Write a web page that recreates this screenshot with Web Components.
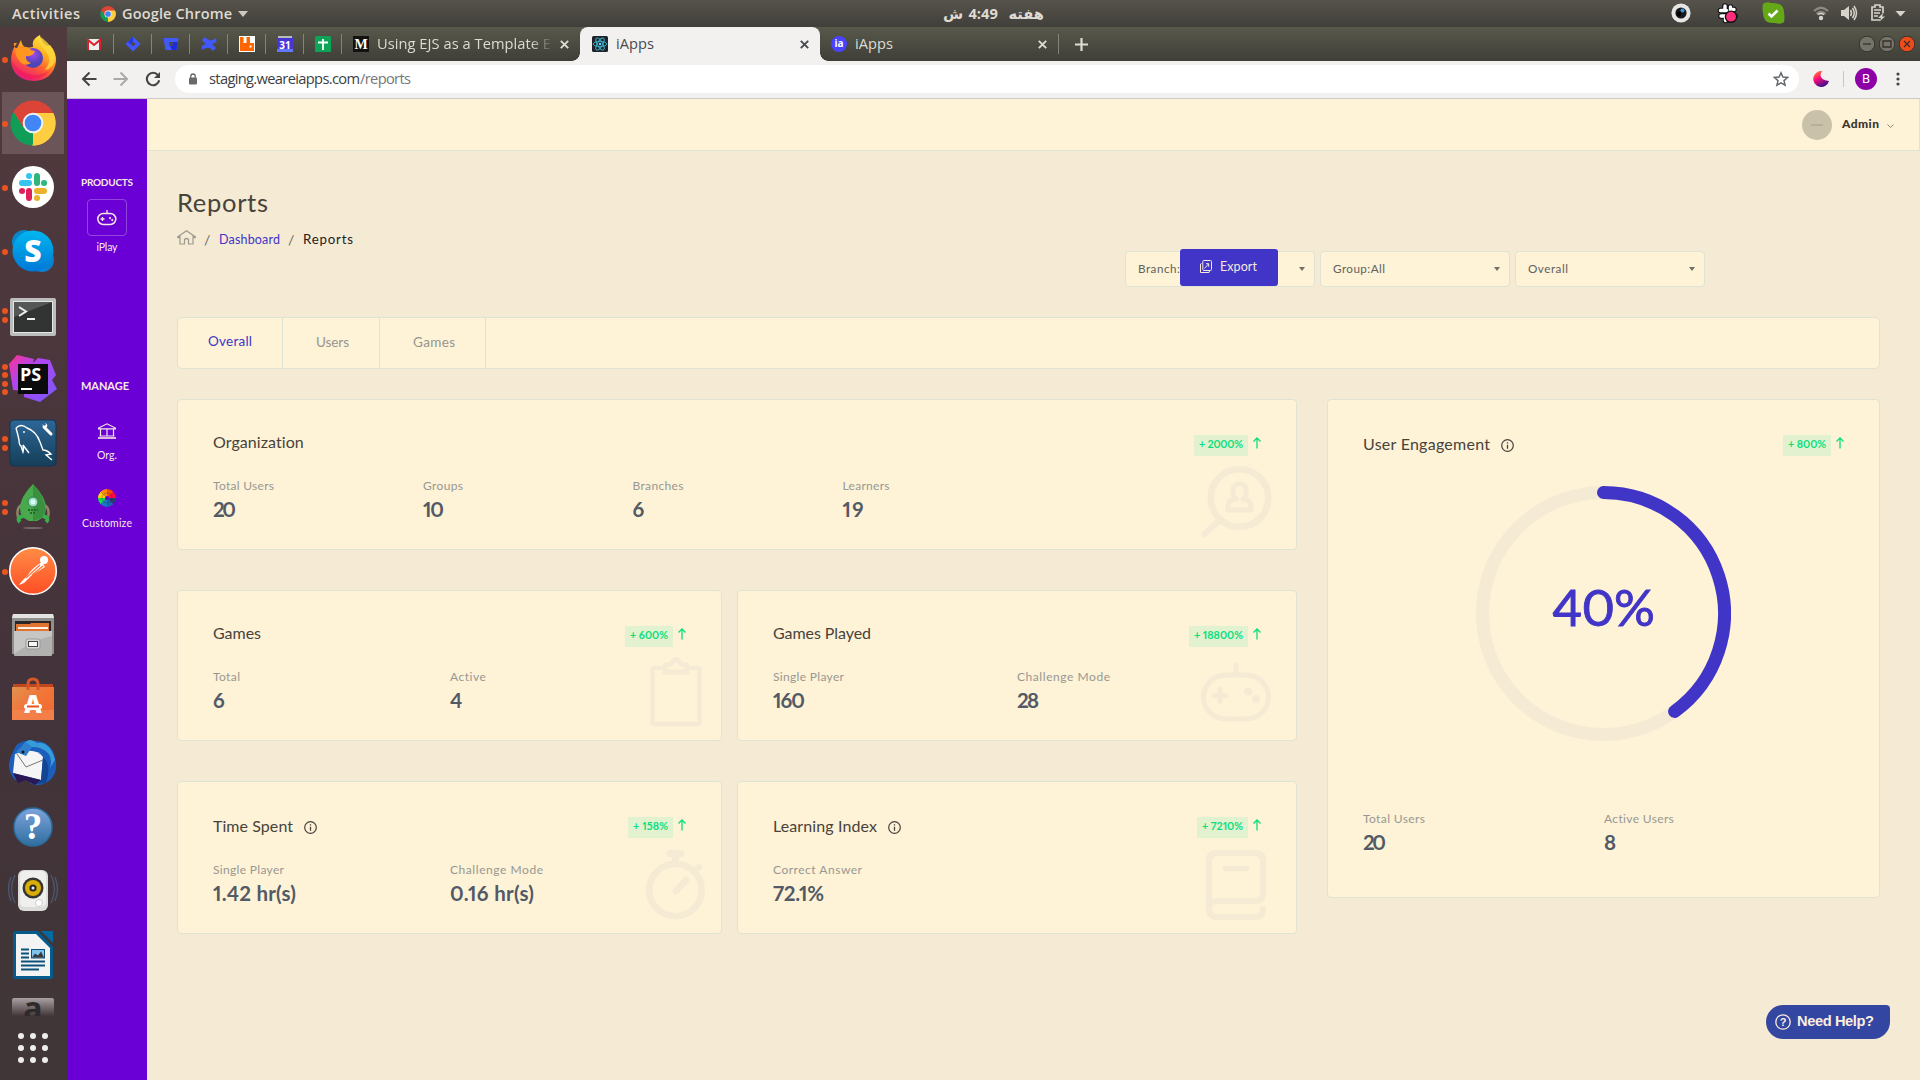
<!DOCTYPE html>
<html lang="en">
<head>
<meta charset="utf-8">
<title>iApps</title>
<style>
html,body{margin:0;padding:0;width:1920px;height:1080px;overflow:hidden;background:#f5ead4}
body{font-family:Lato,"Open Sans",sans-serif;color:#47433c}
</style>
</head>
<body>
<desktop-shell></desktop-shell>
<script>
const define=(name,css,html,after)=>{
  const tpl=document.createElement('template');
  customElements.define(name,class extends HTMLElement{
    connectedCallback(){
      if(this.shadowRoot)return;
      tpl.innerHTML='<style>'+css+'</style>'+(typeof html==='function'?html(this):html);
      this.attachShadow({mode:'open'}).appendChild(tpl.content.cloneNode(true));
      if(after)after(this,this.shadowRoot);
    }
  });
};
const at=(el,n,d='')=>el.getAttribute(n)??d;

/* Text whose tracking is tuned so the run fills the width in "w". */
define('fit-text',':host{display:block;white-space:pre;flex:none;font-feature-settings:"pnum"}','<span><slot></slot></span>',(el,root)=>{
  const w=+el.getAttribute('w');if(!w)return;
  const span=root.querySelector('span'),n=el.textContent.length;
  const nat=span.getBoundingClientRect().width;
  el.style.width=w+'px';
  if(nat&&n>1)span.style.letterSpacing=((w-nat)/(n-1)).toFixed(3)+'px';
});

/* ---------- GNOME top bar ---------- */
const CHROME=(r)=>`<path d="M0 0L${-r*.866} ${-r*.5}A${r} ${r} 0 0 1 ${r*.866} ${-r*.5}Z" fill="#db4437"/>
<path d="M0 0L${r*.9} ${-r*.45}A${r} ${r} 0 0 1 0 ${r}Z" fill="#ffcd40"/>
<path d="M0 0L0 ${r}A${r} ${r} 0 0 1 ${-r*.866} ${-r*.5}Z" fill="#0f9d58"/>
<path d="M${-r*.866} ${-r*.5}A${r} ${r} 0 0 1 ${r*.89} ${-r*.44}H0L${-r*.4} ${r*.24}Z" fill="#db4437"/>
<path d="M${r*.89} ${-r*.44}A${r} ${r} 0 0 1 ${-r*.04} ${r}L${r*.4} ${r*.2}L0 ${-r*.44}Z" fill="#ffcd40"/>
<circle r="${r*.46}" fill="#f1f1f1"/><circle r="${r*.37}" fill="#4285f4"/>`;

define('system-bar',`
:host{display:grid;grid-template-columns:1fr auto 1fr;align-items:center;height:27px;background:linear-gradient(#57534c,#403f3a);color:#dfdbd2;font:600 14.5px/27px "Open Sans","DejaVu Sans",sans-serif}
.l,.r{display:flex;align-items:center}.l{padding-left:12px}
.r{justify-content:flex-end;height:27px}
svg{display:block;flex:none}
.clock{font:bold 14.670px/25px "Open Sans","DejaVu Sans",sans-serif;word-spacing:1.500px;margin-left:64px;width:104px;white-space:nowrap}`,
`<div class="l"><fit-text w="68">Activities</fit-text>
<svg style="margin:0 6px 0 20px" width="16" height="16" viewBox="-8 -8 16 16">${CHROME(7.7)}</svg>
<fit-text w="110">Google Chrome</fit-text>
<svg style="margin-left:6px" width="10" height="6"><path d="M0 0H10L5 6Z" fill="#ccc9c0"/></svg></div>
<div class="clock" dir="rtl">هفته&nbsp; 4:49 ش</div>
<svg class="r" width="250" height="27" viewBox="1670 0 250 27" style="justify-self:end">
<circle cx="1681" cy="13" r="9.6" fill="#e6e6e4"/><circle cx="1681" cy="13" r="5.6" fill="#17191c"/><circle cx="1682.5" cy="10.5" r="2" fill="#3d94d6"/><circle cx="1679" cy="14" r="2.4" fill="#000"/>
<g stroke="#111" stroke-width="5.6" stroke-linecap="round"><path d="M1725 6v4M1730.500 7v5M1720.500 10.500h6M1733 9.500h1M1721 16h5M1725.500 16.500v4M1731 16h4"/></g>
<g stroke="#fff" stroke-width="3.400" stroke-linecap="round"><path d="M1725 6v4M1730.500 7v5M1720.500 10.500h6M1733 9.500h1M1721 16h5M1725.500 16.500v4M1731 16h4"/></g>
<circle cx="1731" cy="16.700" r="5.600" fill="#ff2e7d" stroke="#111" stroke-width="1.400"/>
<path d="M1763 4q3-3 8-1 13-1 13 10 1 4 0 9-3 3-9 1-12 1-12-10-1-5 0-9Z" fill="#64a818"/><path d="M1768.500 13.500l3 3 6-6" fill="none" stroke="#fff" stroke-width="2.600"/>
<g fill="none" stroke="#8b8982" stroke-width="2.200"><path d="M1814 11q7-6.500 14 0M1816.500 14q4.500-4 9 0" /></g><path d="M1818 14.600q3-2 6 0" fill="none" stroke="#d6d3ca" stroke-width="1.500"/><circle cx="1821" cy="18" r="2.200" fill="#d6d3ca"/>
<path d="M1841 10h3l5-4v14l-5-4h-3Z" fill="#d6d3ca"/><g fill="none" stroke="#d6d3ca" stroke-width="1.500"><path d="M1850.500 10q2 3 0 6M1852.500 8q3.500 5 0 10M1854 6q5 7 0 14"/></g>
<path d="M1880 20h-8V7h3V5h5v2h3v6" fill="none" stroke="#d6d3ca" stroke-width="1.700"/><path d="M1874 10h7M1874 13h6M1874 16h4" stroke="#d6d3ca" stroke-width="1.500"/><path d="M1883 13l-5 5h3l-1.500 3.500 5.500-5h-3l1.500-3.500Z" fill="#d6d3ca"/>
<path d="M1895.500 11h10l-5 5.500Z" fill="#d6d3ca"/></svg>`);

/* ---------- Dock ---------- */
define('dock-item',`
:host{display:flex;width:67px;height:64px;position:relative;flex:none}
.dots{width:10px;display:flex;flex-direction:column;justify-content:center;align-items:center;gap:2.500px;z-index:1;padding-top:1px}
.dots i{width:6px;height:6px;border-radius:3px;background:#e95420}
.art{margin-left:-10px;width:67px;height:100%}
:host([active]) .art{background:linear-gradient(#6c5558,#6c5558) 2px 1px/62px 62px no-repeat}
svg{display:block;width:67px;height:100%;overflow:visible}
text{font-family:"Open Sans",sans-serif}`,
el=>`<div class="dots">${'<i></i>'.repeat(+at(el,'dots',0))}</div><div class="art"><svg viewBox="-33 -32 67 64">${ICONS[at(el,'icon')]}</svg></div>`);

const ICONS={
firefox:`<defs><linearGradient id="a" x1=".8" y1="0" x2=".3" y2="1"><stop offset="0" stop-color="#fff44f"/><stop offset=".35" stop-color="#ffb31f"/><stop offset=".65" stop-color="#ff5a34"/><stop offset="1" stop-color="#e31587"/></linearGradient><radialGradient id="b" cx=".5" cy=".3"><stop offset="0" stop-color="#a848f0"/><stop offset="1" stop-color="#4b45b8"/></radialGradient></defs>
<path d="M-19-16q-1 5 3 5l4-8q1 6 5 8l7-1q-2-8 7-12 1 7 7 11l3-1q7 8 6 17-3 18-22 19-21-1-23-20 0-11 6-18Z" fill="url(#a)"/><circle cx="0" cy="-1" r="10" fill="url(#b)"/><path d="M-18-10q9-4 14-1 2 3 6 3-2 6-9 5-1 5 5 7-6 4-11-1Q-18-3-18-10Z" fill="#ff9620"/><path d="M-22-2q2 16 16 21 13 4 22-7-10 6-20 3-15-4-18-17Z" fill="#f5164e" opacity=".55"/><path d="M8-22q-3 8 5 14 7 10-1 19 9-2 10-11 0-11-14-22Z" fill="#ffd83c" opacity=".8"/>`,
chrome:CHROME(22.5),
slack:`<circle r="21" fill="#fff"/><g stroke-width="6" stroke-linecap="round" fill="none"><path d="M-11-4h7" stroke="#36c5f0"/><path d="M-4-11h.1" stroke="#36c5f0"/><path d="M4-11v7" stroke="#2eb67d"/><path d="M11-4h.1" stroke="#2eb67d"/><path d="M4 4h7" stroke="#ecb22e"/><path d="M4 11h.1" stroke="#ecb22e"/><path d="M-4 4v7" stroke="#e01e5a"/><path d="M-11 4h.1" stroke="#e01e5a"/></g>`,
skype:`<defs><linearGradient id="a" x2="0" y2="1"><stop stop-color="#00b7f0"/><stop offset="1" stop-color="#0078d7"/></linearGradient></defs><circle cx="-9" cy="-9" r="12" fill="#0a87ca"/><circle cx="9" cy="9" r="12" fill="#0d7fd0"/><circle r="20.500" fill="url(#a)"/><text y="11" text-anchor="middle" font-size="30" font-weight="800" fill="#fff">S</text>`,
terminal:`<rect x="-23" y="-17" width="46" height="38" rx="2" fill="#bcbcbc"/><rect x="-20" y="-14" width="40" height="32" fill="#e6e6e6"/><rect x="-19" y="-13" width="38" height="30" fill="#323433"/><path d="M-19-13h38L-19 2Z" fill="#555756"/><path d="M-14-8l7 4.500-7 4.500M-6 4h8" stroke="#eee" stroke-width="2" fill="none"/>`,
storm:`<defs><linearGradient id="a" x2="1" y2="1"><stop stop-color="#ff318c"/><stop offset=".35" stop-color="#b345f1"/><stop offset="1" stop-color="#765af8"/></linearGradient></defs><path d="M-24-15l8-9 17 4-1 4 5-5 12 2 6 15-4 5 5 9-17 13-16-5v-6l-11-1Z" fill="url(#a)"/><rect x="-15" y="-15" width="30" height="30" fill="#0b0b0d"/><text x="-13" y="2" font-size="18" font-weight="700" fill="#fff">PS</text><rect x="-12" y="9" width="11" height="2" fill="#fff"/>`,
mysql:`<defs><linearGradient id="a" x2="0" y2="1"><stop stop-color="#2d6797"/><stop offset="1" stop-color="#163e59"/></linearGradient></defs><rect x="-23" y="-23" width="46" height="46" rx="4" fill="url(#a)" stroke="#123650"/><path d="M-17-15q5-5 11 0 9 3 13 14l3 8q4 0 8 4l-5 1 6 5M-17-15q2 7 3 12 0 5 2 6l2 6q1-3 0-7l6 8" fill="none" stroke="#fff" stroke-width="1.400"/><path d="M11-16l7 7" stroke="#fff" stroke-width="3" stroke-linecap="round"/><path d="M9-19l2 2 2-1-1-2q3 1 2 4-3 2-5-3Z" fill="#fff"/><circle cx="-9" cy="-11" r=".9" fill="#fff"/>`,
robot:`<ellipse cy="21" rx="10" ry="1" fill="#77696b"/><path d="M-12-2q-5 4-3 12M12-2q5 4 3 12" fill="none" stroke="#918468" stroke-width="2.500"/><path d="M0-23Q18-5 11 10L4 14H-4L-11 10Q-18-5 0-23Z" fill="#49a94c"/><path d="M0-23Q16-5 11 10L0 14Z" fill="#39913f"/><circle cy="-5" r="5" fill="#9edac3" stroke="#2b8541"/><circle cy="-5" r="2.500" fill="#d7fff5"/><path d="M-5 3H5M-3 6H3" stroke="#226b2d" stroke-width="2" stroke-dasharray="2 1"/><path d="M-10 9q-7 2-3 6M10 9q7 2 3 6" fill="none" stroke="#37b04b" stroke-width="4"/>`,
postman:`<defs><linearGradient id="a" x2="0" y2="1"><stop stop-color="#ff8c45"/><stop offset="1" stop-color="#ff4e25"/></linearGradient></defs><circle cy="0" r="23.300" fill="url(#a)" stroke="#fff" stroke-width="1.600"/><circle cx="11" cy="-11" r="4" fill="#fff"/><path d="M9-9Q-1-3-5 4L-11 10-14 14-9 12-1 4 12-4Z" fill="#fff"/><path d="M7-6L-7 7M10-5L-1 4" stroke="#ff7137" stroke-width="1.200"/>`,
files:`<path d="M-20-21h40l1 6v22H-21v-22Z" fill="#c9c9c9"/><path d="M-20-21h40l1 4H-21Z" fill="#e2e2e2"/><path d="M-21-17h42v36H-21Z" fill="#8f8f8e"/><rect x="-18" y="-14" width="36" height="12" fill="#292727"/><path d="M-17-11h14l1-1h18v8H-17Z" fill="#e0732f"/><path d="M-15-8h30v2h-30Z" fill="#fff1e4"/><rect x="-19" y="-4" width="38" height="25" rx="1" fill="#b1b1b0"/><path d="M-19-4H19V1Q0 5-19 19Z" fill="#c6c6c5"/><rect x="-7" y="4" width="14" height="10" rx="2" fill="#d7d7d7" stroke="#999"/><rect x="-4.500" y="6.500" width="9" height="5" fill="#f6f6f6" stroke="#444"/>`,
software:`<defs><linearGradient id="a" x2="1" y2="1"><stop stop-color="#e09250"/><stop offset=".5" stop-color="#f37337"/><stop offset="1" stop-color="#ee6a30"/></linearGradient></defs><path d="M-20-15H20v6H-20Z" fill="#bd471f"/><path d="M-21-12H21V21H-21Z" fill="url(#a)"/><path d="M-5-9v-6q0-5 5-5t5 5v6" fill="none" stroke="#d65a29" stroke-width="3"/><path d="M-21 11H21V21H-21Z" fill="#f58a56" opacity=".6"/><text y="14" font-size="24" font-weight="800" fill="#fff" text-anchor="middle">A</text><rect x="-9" y="5" width="18" height="5" rx="2.500" fill="#fff"/><rect x="-6" y="6.500" width="12" height="2" fill="#e95420"/>`,
thunder:`<path d="M-20-11Q-16-24-1-22 12-24 20-12 28 8 16 18 7 24-1 21L-10 14-18 17Q-29 4-20-11Z" fill="#1c5ebc"/><path d="M-12-14Q-6-28 4-20 17-22 22-3L17 5q4-14-8-19-7-4-21 0Z" fill="#359bd9"/><path d="M-18-9Q2-17 10-6L8 17-20 10Z" fill="#f5f5f5"/><path d="M-16-9L-7 4 10-3" fill="none" stroke="#777" stroke-width="1"/><path d="M-17-11l10 4 6-9-6-5Z" fill="#2f7fcb"/><circle cx="-10" cy="-11" r="1.500" fill="#111"/><path d="M-20 10L8 17l-6 5-9-5-8 3Z" fill="#2a1756"/><path d="M10-6q9 8 3 26L4 21 8 17Z" fill="#144494"/>`,
help:`<defs><linearGradient id="a" x2="0" y2="1"><stop stop-color="#7ea4dc"/><stop offset="1" stop-color="#2f6e9f"/></linearGradient></defs><circle r="19" fill="url(#a)" stroke="#2a6c9c" stroke-width="1.500"/><text y="12" text-anchor="middle" font-size="37" fill="#fff" style="font-family:'Liberation Serif',serif;font-weight:bold">?</text>`,
rhythm:`<g fill="none" stroke="#4f627e" stroke-width="1.300" opacity=".8"><path d="M-18-16q-7 14 0 28M18-16q7 14 0 28M-22-14q-5 12 0 24M22-14q5 12 0 24"/></g><rect x="-15" y="-21" width="30" height="41" rx="6" fill="#dcdcda"/><rect x="-13" y="-20" width="26" height="36" rx="5" fill="#efefed"/><circle cy="-3" r="10.500" fill="#38372f"/><circle cy="-3" r="8" fill="#d9ad08"/><circle cy="-3" r="3.600" fill="#292929"/><circle cy="-3" r="1.500" fill="#eee"/><circle cx="6" cy="12" r="3.500" fill="#fff" stroke="#ccc"/>`,
writer:`<path d="M-17-24H5L20-8V22q0 2-3 2H-17q-3 0-3-2V-21q0-3 3-3Z" fill="#045b8c"/><path d="M-17-21H3L17-7V21H-17Z" fill="#f3f3f3"/><path d="M8-24h12v12Z" fill="#0369a3"/><g stroke="#0b527b" stroke-width="2"><path d="M-12-5.500h8M-12-1.500h8M-12 2.500h8M-12 6.500h24M-12 10.500h24M-12 14.500H6"/></g><rect x="-1.500" y="-5.500" width="13" height="8.500" fill="#7fc2ed" stroke="#0b527b"/><path d="M-1 2.500l3-4 3 2 3-4 3 6Z" fill="#3a3a3a"/>`,
};

define('app-dock',`
:host{display:flex;flex-direction:column;width:67px;height:1053px;background:linear-gradient(#513a3e,#43333a 65%,#403637)}
.peek{width:42px;height:18px;margin:11px 0 0 12px;overflow:hidden;background:linear-gradient(#a8a0a2,#43363a);border-radius:2px 2px 0 0;text-align:center;font:bold 32px/20px "Open Sans",sans-serif;color:#2e2a2b}
.grid{display:grid;grid-template-columns:repeat(3,6px);gap:6px;margin:17px 0 0 18px}
.grid i{width:6px;height:6px;border-radius:3px;background:#eee}`,
`<dock-item icon="firefox" dots="1"></dock-item><dock-item icon="chrome" dots="1" active></dock-item><dock-item icon="slack" dots="1"></dock-item><dock-item icon="skype" dots="1"></dock-item><dock-item icon="terminal" dots="2"></dock-item><dock-item icon="storm" dots="4"></dock-item><dock-item icon="mysql" dots="2"></dock-item><dock-item icon="robot" dots="2"></dock-item><dock-item icon="postman" dots="1"></dock-item>
<dock-item icon="files"></dock-item><dock-item icon="software"></dock-item><dock-item icon="thunder"></dock-item><dock-item icon="help"></dock-item><dock-item icon="rhythm"></dock-item><dock-item icon="writer"></dock-item>
<div class="peek">a</div><div class="grid">${'<i></i>'.repeat(9)}</div>`);

/* ---------- Browser chrome ---------- */
const FAV={
gmail:`<rect x="1" y="3" width="14" height="11" fill="#eee"/><path d="M2 14V4l6 5 6-5v10" fill="none" stroke="#d9202c" stroke-width="2"/>`,
jira:`<path d="M8 .5l7.500 7.500L8 15.500.5 8Z" fill="#4257fb"/><path d="M8 5.500l2.500 2.500L8 10.500 5.500 8Z" fill="#4c4b41"/><path d="M8 .5v5L5.500 8 3 6Z" fill="#2536d9"/>`,
bit:`<path d="M.5 2h15l-2 12h-11Z" fill="#4059fb"/><path d="M6 6h4l-.6 4H6.500Z" fill="#4c4b41"/><path d="M10 6h4.800l-1.300 8H9l-2-4h2.400Z" fill="#1d2bd8"/>`,
conf:`<path d="M1 4l3-3q4 6 11 1l.500 4Q6 12 1 4ZM15 12l-3 3Q8 9 1 14l-.500-4Q9 4 15 12Z" fill="#4158fb"/>`,
rabbit:`<rect width="16" height="16" fill="#fff"/><path d="M1 1h3.500v6h3V1H11v6h4v8H1Z" fill="#f60"/><rect x="10.500" y="9.500" width="2" height="2" fill="#fff"/>`,
cal:`<rect y="1" width="16" height="15" rx="1" fill="#4836d4"/><path d="M1 0h14v2H1Z" fill="#bbb"/><rect y="13" width="16" height="3" fill="#6278ff"/><text x="8" y="12.500" font-size="10" font-weight="700" text-anchor="middle" fill="#fff">31</text>`,
sheet:`<rect width="16" height="16" rx="1.500" fill="#0ca558"/><path d="M8 3v11M3 6.500h10" stroke="#fff" stroke-width="1.800"/>`,
medium:`<rect width="16" height="16" fill="#121212"/><text x="8" y="13" font-size="14" text-anchor="middle" fill="#fff" style="font-family:'Liberation Serif',serif;font-weight:bold">M</text>`,
react:`<rect width="16" height="16" rx="1.500" fill="#20232a"/><g fill="none" stroke="#3fb3cf" stroke-width=".9"><ellipse cx="8" cy="8" rx="6.800" ry="2.600"/><ellipse cx="8" cy="8" rx="6.800" ry="2.600" transform="rotate(60 8 8)"/><ellipse cx="8" cy="8" rx="6.800" ry="2.600" transform="rotate(120 8 8)"/></g><circle cx="8" cy="8" r="1.200" fill="#61dafb"/>`,
ia:`<circle cx="8" cy="8" r="8" fill="#4743ff"/><text x="8" y="11.300" font-size="10" font-weight="700" text-anchor="middle" fill="#fff">ia</text>`
};
define('fav-icon',`:host{display:block;width:16px;height:16px;flex:none}svg{display:block}text{font-family:"Open Sans",sans-serif}`,el=>`<svg width="16" height="16">${FAV[at(el,'n')]}</svg>`);
define('close-x',`:host{display:block;width:9px;height:9px;flex:none}svg{display:block}`,`<svg width="9" height="9"><path d="M.8.8l7.400 7.400M8.200.8L.8 8.200" stroke="currentColor" stroke-width="1.900"/></svg>`);
define('browser-tabs',`
:host{display:flex;align-items:center;height:34px;background:linear-gradient(#58594b,#3f3e38);color:#dedbd2;font:14.670px/34px "Open Sans",sans-serif}
.pin{display:flex;align-items:center;width:37px;justify-content:center;height:20px;border-right:1px solid #85847b}
.pin:first-of-type{width:38px;padding-left:8px}
.tab{display:flex;align-items:center;height:34px;width:240px;box-sizing:border-box;padding:0 11px 0 12px}
.tab fit-text{margin:-2px 0 0 8px}.tab close-x{margin-left:auto}
.first{width:246px;padding-left:19px;margin-left:-8px}
.fade{-webkit-mask:linear-gradient(90deg,#000 88%,rgba(0,0,0,.1))}
.on{background:#f2f1f0;color:#474b50;border-radius:8px 8px 0 0;position:relative}
.on:before,.on:after{content:"";position:absolute;bottom:0;width:8px;height:8px;background:radial-gradient(circle at 0 0,transparent 7.500px,#f2f1f0 8px)}
.on:before{left:-8px}.on:after{right:-8px;transform:scaleX(-1)}
.last{width:238px;padding-left:11px}
.sep{width:1px;height:20px;background:#85847b}
.win{display:flex;gap:4px;margin-left:auto;padding-right:5px}`,
`${['gmail','jira','bit','conf','rabbit','cal','sheet'].map(n=>`<div class="pin"><fav-icon n="${n}"></fav-icon></div>`).join('')}
<div class="tab first"><fav-icon n="medium"></fav-icon><fit-text class="fade" w="174">Using EJS as a Template E</fit-text><close-x></close-x></div>
<div class="tab on"><fav-icon n="react"></fav-icon><fit-text w="38">iApps</fit-text><close-x></close-x></div>
<div class="tab last"><fav-icon n="ia"></fav-icon><fit-text w="38">iApps</fit-text><close-x></close-x></div>
<div class="sep"></div>
<svg style="margin-left:16px" width="13" height="13"><path d="M6.500 0v13M0 6.500h13" stroke="#dedbd2" stroke-width="2.200"/></svg>
<div class="win">${['M4 8h8','M4 5h8v6H4Z','M5 5l6 6M11 5l-6 6'].map((d,i)=>`<svg width="16" height="16"><circle cx="8" cy="8" r="7.800" fill="${i==2?'#ef4b1a':'#74746a'}" stroke="#34332e"/><path d="${d}" fill="none" stroke="#3a2f28" stroke-width="1.300"/></svg>`).join('')}</div>`);

define('browser-toolbar',`
:host{display:flex;align-items:center;box-sizing:border-box;height:38px;padding:0 20px 2px 14px;border-bottom:1px solid #cbcac9;background:#f2f1f0;font:14.670px/28px "Open Sans",sans-serif;color:#3c3f43}
svg{display:block;flex:none}
.omni{display:flex;align-items:center;flex:1;height:28px;border-radius:14px;background:#fff;margin:0 14px 0 14px;padding:0 10px 0 14px}
.omni fit-text{margin-top:-2px}
.omni fit-text:first-of-type{margin-left:12px}.g{color:#74777b}
.b{width:22px;height:22px;border-radius:11px;background:#8c00a6;color:#fff;text-align:center;font:13px/22px Roboto,sans-serif;margin:0 19px 0 11px}
.v{width:1px;height:16px;background:#c8c7c6;margin-left:14px}`,
`<svg width="16" height="16"><path d="M8.500 1.500L2 8l6.500 6.500M2 8h13.500" fill="none" stroke="#454545" stroke-width="2"/></svg>
<svg style="margin-left:16px" width="16" height="16"><path d="M7.500 1.500L14 8l-6.500 6.500M14 8H.5" fill="none" stroke="#aaa9a8" stroke-width="2"/></svg>
<svg style="margin-left:16px" width="16" height="16"><path d="M13 4.200A6.200 6.200 0 1 0 14.200 9.200" fill="none" stroke="#454545" stroke-width="2.100"/><path d="M15 1v6H9Z" fill="#454545"/></svg>
<div class="omni"><svg width="8" height="12"><rect y="4.500" width="8" height="7" rx="1" fill="#666a6d"/><path d="M1.800 5V3.200a2.200 2.200 0 0 1 4.400 0V5" fill="none" stroke="#666a6d" stroke-width="1.300"/></svg>
<fit-text w="151">staging.weareiapps.com</fit-text><fit-text class="g" w="51">/reports</fit-text>
<svg style="margin-left:auto" width="16" height="16"><path d="M8 1.800l1.900 4.300 4.700.4-3.600 3.100 1.100 4.600L8 11.800l-4.100 2.400L5 9.600 1.400 6.500l4.700-.4Z" fill="none" stroke="#65696c" stroke-width="1.500"/></svg></div>
<svg width="16" height="16"><defs><linearGradient id="m" x1="0" y1="0" x2=".5" y2="1"><stop stop-color="#ff9a1f"/><stop offset=".5" stop-color="#ff0a78"/><stop offset="1" stop-color="#43108f"/></linearGradient></defs><path d="M9 0Q4 8 16 10A8 8 0 1 1 9 0Z" fill="url(#m)"/></svg>
<div class="v"></div><div class="b">B</div>
<svg width="4" height="14"><g fill="#454545"><circle cx="2" cy="2" r="1.600"/><circle cx="2" cy="7" r="1.600"/><circle cx="2" cy="12" r="1.600"/></g></svg>`);

/* ---------- Application ---------- */
define('side-nav',`
:host{display:flex;flex-direction:column;align-items:center;width:80px;height:981px;background:#6a00d5;color:#f8e8e4;font:400 10.500px/14px Lato,sans-serif}
.h{font-weight:700;line-height:16px;align-self:flex-start;margin-left:14px}
.box{display:flex;align-items:center;justify-content:center;width:38px;height:35px;border:1px solid #9145de;border-radius:4px;margin:9px 0 4px}
svg{display:block}`,
`<fit-text class="h" w="52" style="margin-top:75px;font-size:10px">PRODUCTS</fit-text>
<div class="box"><svg width="20" height="18" viewBox="0 0 20 18" fill="none" stroke="#f8e8e4"><rect x=".8" y="4.500" width="18" height="11" rx="5.500" stroke-width="1.500"/><path d="M10 4.500V1M5.500 8v4M3.500 10h4" stroke-width="1.300"/><circle cx="13" cy="9" r=".7" fill="#f8e8e4"/><circle cx="15.300" cy="11" r=".7" fill="#f8e8e4"/></svg></div>
<fit-text w="21">iPlay</fit-text>
<fit-text class="h" w="48" style="margin-top:124px;font-size:11px">MANAGE</fit-text>
<svg style="margin:29px 0 9px" width="18" height="16" viewBox="0 0 18 16" fill="none" stroke="#f8e8e4" stroke-width="1.200"><path d="M.6 5L9 .8 17.400 5v.8H.6ZM2.500 6v7M9 6v7M15.500 6v7M1.500 13h15"/><path d="M0 15h18" stroke-width="2" opacity=".8"/></svg>
<fit-text w="20">Org.</fit-text>
<svg style="margin:27px 0 9px" width="18" height="18" viewBox="-9 -9 18 18">${['#ffd000','#ff9000','#ff4a00','#ff0a3c','#20406f','#1b65b0','#1878c8','#12dc48'].map((col,i)=>{const a=(i-4)*Math.PI/4,b=a+Math.PI/4,s=t=>`${(9*Math.cos(t)).toFixed(2)} ${(9*Math.sin(t)).toFixed(2)}`;return `<path d="M0 0L${s(a)}A9 9 0 0 1 ${s(b)}Z" fill="${col}"/>`}).join('')}<circle r="5" fill="none" stroke="#2b2350" stroke-width="1" opacity=".35"/><circle r="2" fill="#6a00d5"/></svg>
<fit-text w="50">Customize</fit-text>`);

define('app-header',`
:host{display:flex;align-items:center;justify-content:flex-end;box-sizing:border-box;height:52px;background:#fef2d7;border:1px solid #dfe3d2;border-width:0 1px 1px 0;padding-right:25px;font:900 12px/20px Lato,sans-serif;color:#38342d}
.av{width:30px;height:30px;border-radius:15px;background:#cac1ab;margin-right:10px;display:flex;align-items:center;justify-content:center}
.av i{width:12px;height:2px;background:#b8af9b}`,
`<div class="av"><i></i></div><fit-text w="37" style="margin-top:-2px">Admin</fit-text><svg style="margin:3px 0 0 8px" width="7" height="5"><path d="M.5.5l3 3 3-3" fill="none" stroke="#8b867b"/></svg>`);

define('select-box',`
:host{display:flex;align-items:center;justify-content:space-between;box-sizing:border-box;width:190px;height:36px;border:1px solid #dfe3d2;border-radius:4px;background:#fef2d7;color:#61625f;font:11.700px/16px Lato,sans-serif;padding:0 9px 0 12px}fit-text{margin-top:-2px}`,
el=>`<fit-text w="${at(el,'w')}">${at(el,'label')}</fit-text><svg width="6" height="4"><path d="M0 0h6L3 4Z" fill="#716f68"/></svg>`);

define('filter-bar',`
:host{display:flex;gap:5px;margin:1px 0 0 948px;position:relative}
.export{position:absolute;left:55px;top:-2px;width:98px;height:37px;box-sizing:border-box;border-radius:3px;background:#4135c8;color:#f8e9dd;display:flex;align-items:center;padding:0 0 2px 20px;gap:8px;font:12.500px/16px Lato,sans-serif}`,
`<select-box label="Branch:" w="42"></select-box><select-box label="Group:All" w="52"></select-box><select-box label="Overall" w="40"></select-box>
<div class="export"><svg width="12" height="13" viewBox="0 0 12 13" fill="none" stroke="#f8e9dd"><rect x="2.800" y=".5" width="8.700" height="10" rx="1"/><path d="M1.500 3.500L.5 4v8.500h8.500l.5-1.500M4.500 8.500l4-4.500M6 3.700h2.700v3"/></svg><fit-text w="37">Export</fit-text></div>`);

define('tab-list',`
:host{display:flex;box-sizing:border-box;height:52px;margin-top:30px;width:1703px;border:1px solid #dfe3d2;border-radius:5px;background:#fef2d7;color:#959690;font:13.500px/18px Lato,sans-serif}
div{box-sizing:border-box;display:flex;align-items:center;border-right:1px solid #dfe3d2;padding:0 0 2px 30px}
.on{color:#4135c8;width:105px;padding-bottom:4px}.u{width:97px;padding-left:33px}.g{width:106px;padding-left:33px}`,
`<div class="on"><fit-text w="44">Overall</fit-text></div><div class="u"><fit-text w="33">Users</fit-text></div><div class="g"><fit-text w="42">Games</fit-text></div>`);

define('stat-item',`
:host{display:block;flex:none;font-family:Lato,sans-serif}
.l{font-size:12px;line-height:16px;color:#979893}
.v{font-weight:700;font-size:20.500px;line-height:24px;margin-top:3px;color:#525a66}`,
el=>`<fit-text class="l" w="${at(el,'lw')}">${at(el,'label')}</fit-text><fit-text class="v" w="${at(el,'vw')}">${at(el,'value')}</fit-text>`);

define('stat-card',`
:host{display:block;box-sizing:border-box;background:#fef2d7;border:1px solid #dfe3d2;border-radius:4px;padding:35px 35px 0}
.head{display:flex;height:21px;align-items:center}
.t{font:16px/20px Lato,sans-serif;color:#47433c;margin-top:-8px}
:host([info]) .t{margin-top:-4px}
.i{margin:0 0 0 11px}
.badge{margin-left:auto;height:21px;background:#e2f2d1;color:#0bdf7d;font:700 10.700px/18px Lato,sans-serif;padding:0 5px}
.up{margin:-5px 0 0 5px}
.stats{display:flex;margin-top:22px}
:host([info]) .stats{margin-top:24px}
:host([chart]) .stats{margin-top:0}
slot[name=art]{display:block;margin-left:auto}`,
el=>`<div class="head"><fit-text class="t" w="${at(el,'tw')}">${at(el,'name')}</fit-text>
${el.hasAttribute('info')?'<svg class="i" width="13" height="13"><circle cx="6.500" cy="6.500" r="5.800" fill="none" stroke="#47433c" stroke-width="1.200"/><path d="M6.500 5.700v4M6.500 3.300v1.300" stroke="#47433c" stroke-width="1.300"/></svg>':''}
<div class="badge"><fit-text w="${at(el,'bw')}">${at(el,'badge')}</fit-text></div><svg class="up" width="8" height="12"><path d="M4 11.500V1M.5 4.500L4 1l3.500 3.500" fill="none" stroke="#0bdf7d" stroke-width="1.300"/></svg></div>
<slot name="chart"></slot><div class="stats"><slot></slot><slot name="art"></slot></div>`);

const ART={
search:`<circle cx="38.500" cy="32" r="28.800" stroke-width="6.500"/><path d="M19 54L3.500 68" stroke-width="6"/><path d="M32 24a6.500 6.500 0 0 1 13 0v2q0 5-3 7 8 1 8 7v4H27v-4q0-6 8-7-3-2-3-7Z" stroke-width="5"/>`,
clip:`<g transform="translate(18 0)"><path d="M14 11H4.500q-2 0-2 2v52q0 2 2 2h43q2 0 2-2V13q0-2-2-2H38" stroke-width="4.500"/><path d="M15 15V8q6 0 7-2 4-7 8 0 1 2 7 2v7Z" stroke-width="5"/></g>`,
pad:`<rect x="2.500" y="18" width="65" height="44" rx="22" stroke-width="5"/><path d="M35 17V8" stroke-width="5"/><path d="M19 32.500v12M13 38.500h12" stroke-width="5"/><circle cx="47" cy="34.500" r="4" fill="#f5ead4" stroke="none"/><circle cx="55" cy="42" r="4" fill="#f5ead4" stroke="none"/>`,
watch:`<g transform="translate(11 0)"><circle cx="29.500" cy="40" r="26.200" stroke-width="6.500"/><path d="M24 3.500h11M29.500 4v8" stroke-width="7"/><path d="M50 20l3-3" stroke-width="6"/><path d="M30 41L40 30" stroke-width="6.500"/></g>`,
book:`<g transform="translate(10 0)"><path d="M3 60V11q0-8 8-8h38q8 0 8 8v32q0 8-8 8H11q-8 0-8 7 0 9 8 9h38q8 0 8-8" stroke-width="6"/><path d="M19.500 18.500h21" stroke-width="5.500"/></g>`
};
define('card-art',`:host{display:block;height:0}svg{display:block;overflow:visible;margin-top:-12px}`,
el=>`<svg width="70" height="70" viewBox="0 0 70 70" fill="none" stroke="#f5ead4" stroke-linecap="round" stroke-linejoin="round">${ART[at(el,'n')]}</svg>`);

define('progress-ring',`
:host{display:flex;justify-content:center;padding-top:30px;height:325px}
div{display:grid;place-items:center;width:255px;height:255px}
svg,span{grid-area:1/1}
span{font:400 51px/60px Lato,sans-serif;-webkit-text-stroke:.9px #4135c8;color:#4135c8;margin-top:-14px}`,
`<div><svg width="255" height="255" viewBox="-127.500 -127.500 255 255" fill="none" stroke-width="13" stroke-linecap="round"><circle r="121" stroke="#f5ead4"/><path d="M0-121A121 121 0 0 1 71.100 97.900" stroke="#4135c8"/></svg><span><fit-text w="103">40%</fit-text></span></div>`);

define('help-button',`
:host{position:absolute;left:1619px;top:906px;box-sizing:border-box;width:124px;height:34px;border-radius:17px 4px 17px 17px;background:#3346a2;color:#fbeee0;display:flex;align-items:center;padding-left:9px;gap:6px;font:bold 14.670px/32px "Liberation Sans",sans-serif}
fit-text{margin-top:-2px}
text{font:bold 11px "Liberation Sans",sans-serif}`,
`<svg width="16" height="16"><circle cx="8" cy="8" r="7.200" fill="none" stroke="#fbeee0" stroke-width="1.300"/><text x="8" y="12" text-anchor="middle" fill="#fbeee0">?</text></svg><fit-text w="77">Need Help?</fit-text>`);

define('reports-page',`
:host{display:block;position:relative;height:981px;background:#f5ead4;overflow:hidden}
main{padding:35px 0 0 30px;display:flex;flex-direction:column;align-items:flex-start}
h1{margin:0;font:25.500px/32px Lato,sans-serif;color:#47433c}
.crumbs{display:flex;align-items:center;height:20px;margin-top:12px;font:12.500px/20px Lato,sans-serif}
.crumbs a{color:#4135c8}.crumbs i{width:6px;margin:0 9px 0 8px;font-style:normal;font-size:14px;color:#6b675e}
.cards{display:flex;gap:30px;margin-top:30px}
.left{display:grid;grid-template-columns:545px 560px;column-gap:15px;grid-template-rows:151px 151px 153px;row-gap:40px}
.left>*:first-child{grid-column:1/3}
.right{width:553px;height:499px}`,
`<app-header></app-header>
<main><h1><fit-text w="91">Reports</fit-text></h1>
<div class="crumbs"><svg style="margin:-5px 0 0 0" width="19" height="15" fill="none" stroke="#9d998e" stroke-width="1.200"><path d="M.5 7L9.500.8 18.500 7l-.6.800-1.900-.900V14h-4.500V9.500q-2-2-4 0V14H3V6.900L1.100 7.800Z"/></svg>
<i style="margin-left:8px">/</i><a><fit-text w="61">Dashboard</fit-text></a><i>/</i><fit-text w="50" style="font-size:13.300px;color:#23211e;margin-top:-2px">Reports</fit-text></div>
<filter-bar></filter-bar><tab-list></tab-list>
<div class="cards"><div class="left">
<stat-card name="Organization" tw="91" badge="+ 2000%" bw="44">
<stat-item style="width:210px" label="Total Users" lw="61" value="20" vw="23"></stat-item><stat-item style="width:209.500px" label="Groups" lw="40" value="10" vw="21"></stat-item><stat-item style="width:210px" label="Branches" lw="51" value="6"></stat-item><stat-item label="Learners" lw="47" value="19" vw="21"></stat-item>
<card-art slot="art" n="search" style="margin-right:-10px"></card-art></stat-card>
<stat-card name="Games" tw="48" badge="+ 600%" bw="38"><stat-item style="width:237px" label="Total" lw="27" value="6"></stat-item><stat-item label="Active" lw="36" value="4"></stat-item><card-art slot="art" n="clip" style="margin-right:-16px"></card-art></stat-card>
<stat-card name="Games Played" tw="98" badge="+ 18800%" bw="49"><stat-item style="width:244px" label="Single Player" lw="71" value="160" vw="32"></stat-item><stat-item label="Challenge Mode" lw="93" value="28" vw="22"></stat-item><card-art slot="art" n="pad" style="margin-right:-10px"></card-art></stat-card>
<stat-card info name="Time Spent" tw="80" badge="+ 158%" bw="35"><stat-item style="width:237px" label="Single Player" lw="71" value="1.42 hr(s)" vw="83"></stat-item><stat-item label="Challenge Mode" lw="93" value="0.16 hr(s)" vw="84"></stat-item><card-art slot="art" n="watch" style="margin-right:-19px"></card-art></stat-card>
<stat-card info name="Learning Index" tw="104" badge="+ 7210%" bw="41"><stat-item label="Correct Answer" lw="89" value="72.1%" vw="51"></stat-item><card-art slot="art" n="book" style="margin-right:-5px"></card-art></stat-card>
</div>
<stat-card class="right" info chart name="User Engagement" tw="127" badge="+ 800%" bw="38"><progress-ring slot="chart"></progress-ring><stat-item style="width:241px" label="Total Users" lw="62" value="20" vw="23"></stat-item><stat-item label="Active Users" lw="70" value="8"></stat-item></stat-card>
</div></main><help-button></help-button>`);

define('desktop-shell',`
:host{display:block;width:1920px;height:1080px;overflow:hidden}
.row{display:flex}.win{flex:1;min-width:0}.page{display:flex}reports-page{flex:1;min-width:0}`,
`<system-bar></system-bar><div class="row"><app-dock></app-dock><div class="win"><browser-tabs></browser-tabs><browser-toolbar></browser-toolbar><div class="page"><side-nav></side-nav><reports-page></reports-page></div></div></div>`);
</script>
</body>
</html>
